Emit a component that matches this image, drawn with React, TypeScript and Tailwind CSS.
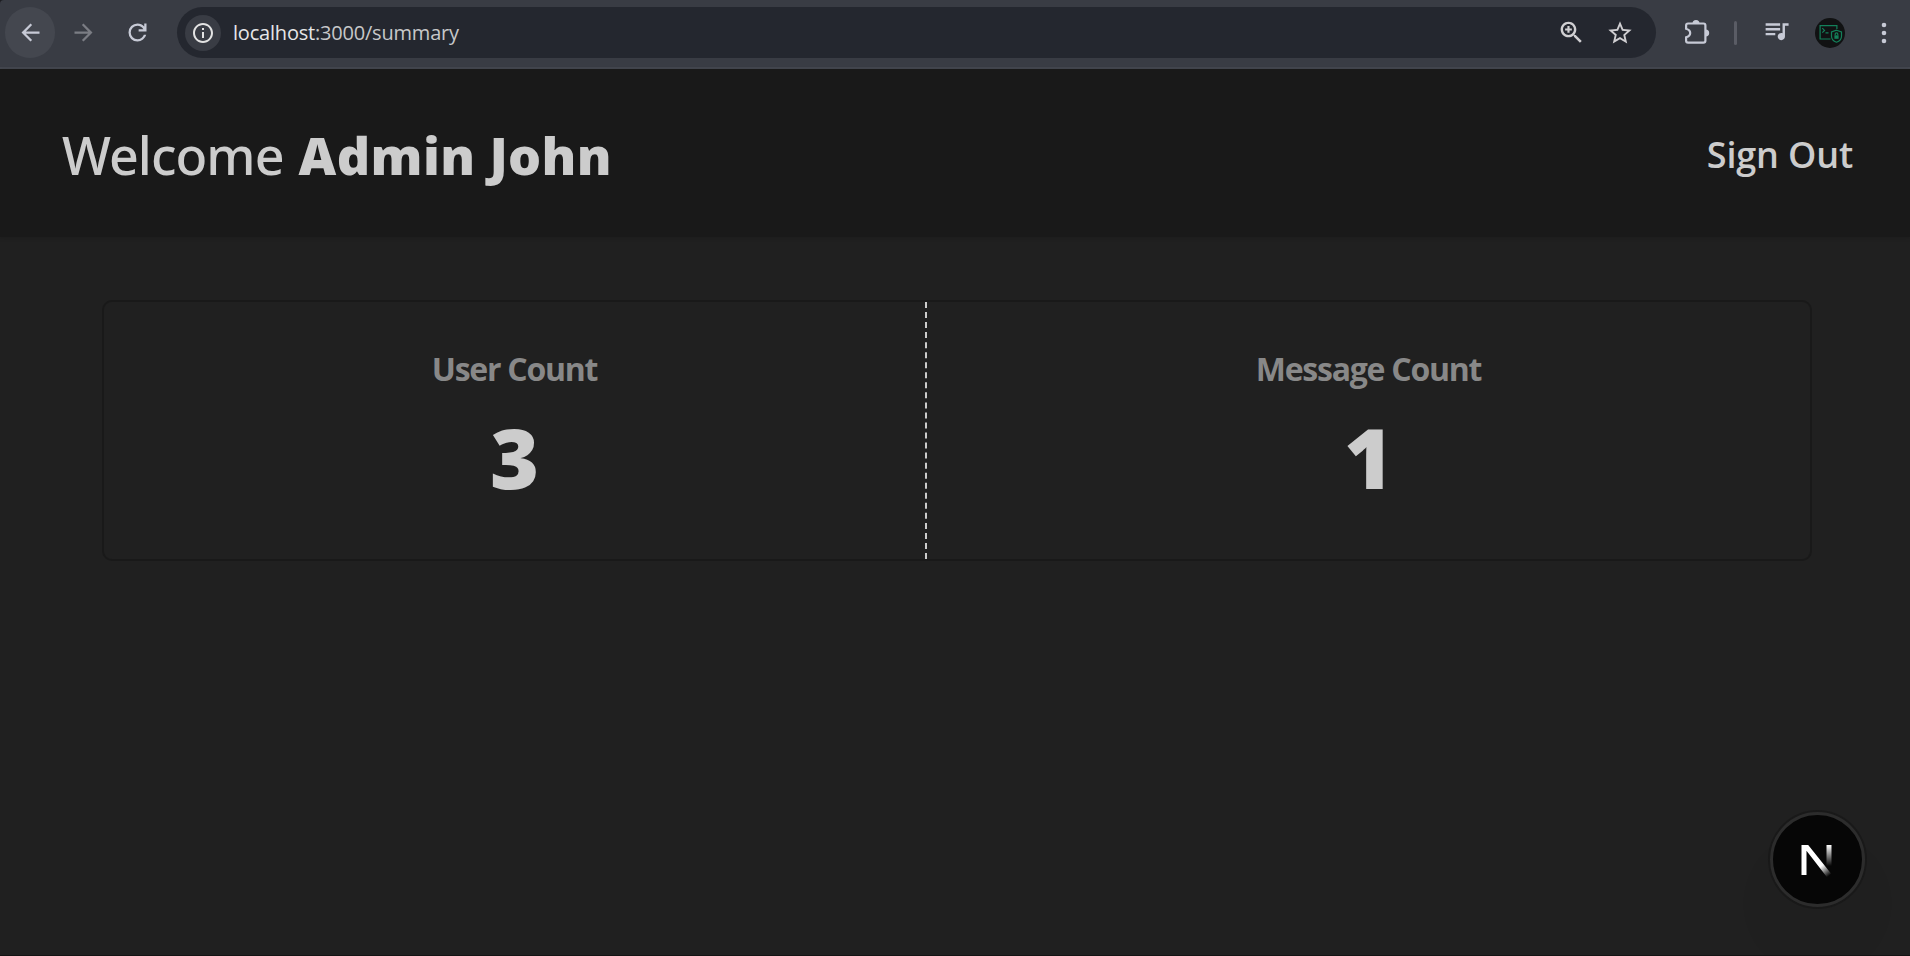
import type { ReactNode } from "react";

function Icon({ d, className }: { d: string; className: string }) {
  return (
    <svg viewBox="0 0 24 24" fill="currentColor" className={`shrink-0 ${className}`}>
      <path d={d} />
    </svg>
  );
}

const paths = {
  back: "M20 11H7.83l5.59-5.59L12 4l-8 8 8 8 1.41-1.41L7.83 13H20v-2z",
  forward: "M4 11h12.17l-5.59-5.59L12 4l8 8-8 8-1.41-1.41L16.17 13H4v-2z",
  reload:
    "M12 20q-3.35 0-5.675-2.325T4 12t2.325-5.675T12 4q1.725 0 3.3.713T18 6.75V4h2v7h-7V9h4.2q-.8-1.4-2.187-2.2T12 6Q9.5 6 7.75 7.75T6 12t1.75 4.25T12 18q1.925 0 3.475-1.1T17.65 14h2.1q-.7 2.65-2.85 4.325T12 20",
  info: "M11 7h2v2h-2zm0 4h2v6h-2zm1-9C6.48 2 2 6.48 2 12s4.48 10 10 10 10-4.48 10-10S17.52 2 12 2zm0 18c-4.41 0-8-3.59-8-8s3.59-8 8-8 8 3.59 8 8-3.59 8-8 8z",
  zoomIn:
    "M15.5 14h-.79l-.28-.27C15.41 12.59 16 11.11 16 9.5 16 5.91 13.09 3 9.5 3S3 5.91 3 9.5 5.91 16 9.5 16c1.61 0 3.09-.59 4.23-1.57l.27.28v.79l5 4.99L20.49 19l-4.99-5zm-6 0C7.01 14 5 11.99 5 9.5S7.01 5 9.5 5 14 7.01 14 9.5 11.99 14 9.5 14zM8.6 6.7h1.8v1.9h1.9v1.8h-1.9v1.9H8.6v-1.9H6.7V8.6h1.9z",
  star: "M22 9.24l-7.19-.62L12 2 9.19 8.63 2 9.24l5.46 4.73L5.82 21 12 17.27 18.18 21l-1.63-7.03L22 9.24zM12 15.4l-3.76 2.27 1-4.28-3.32-2.88 4.38-.38L12 6.1l1.71 4.04 4.38.38-3.32 2.88 1 4.28L12 15.4z",
  queue:
    "M15 6H3v2h12V6zm0 4H3v2h12v-2zM3 16h8v-2H3v2zM17 6v8.18c-.31-.11-.65-.18-1-.18-1.66 0-3 1.34-3 3s1.34 3 3 3 3-1.34 3-3V8h3V6h-5z",
};

function ExtensionsIcon() {
  return (
    <svg viewBox="0 0 26 26" className="h-[26px] w-[26px] shrink-0" fill="none">
      <path
        d="M4 4.5H19.5Q21.4 4.5 21.4 6.4V21.7Q21.4 23.6 19.5 23.6H4Q2.1 23.6 2.1 21.7V18.3Q6.2 17 6.2 14T2.1 9.7V6.4Q2.1 4.5 4 4.5Z"
        stroke="currentColor"
        strokeWidth="2.2"
      />
      <path d="M8.5 4.4a3.5 3.5 0 0 1 7 0zM21.7 10.5a3.5 3.5 0 0 1 0 7z" fill="currentColor" />
    </svg>
  );
}

function Avatar() {
  return (
    <svg viewBox="0 0 30 30" className="h-[30px] w-[30px] shrink-0" fill="none" stroke="#13805a" strokeWidth="1.2">
      <circle cx="15" cy="15" r="15" fill="#111213" stroke="none" />
      <path d="M15.5 21H5.1V7.6H21.9V11" />
      <path d="M7.3 10.2l2.2 2.2-2.2 2.2M10.5 14.8h3" />
      <path d="M21.5 12.2l5 1.8v4.2c0 2.8-2 4.9-5 6-3-1.1-5-3.2-5-6V14z" />
      <path d="M20.2 17.3v-1.2a1.3 1.3 0 0 1 2.6 0v1.2" />
      <rect x="19.4" y="17.3" width="4.2" height="3.5" fill="#13805a" stroke="none" />
    </svg>
  );
}

function BrowserBar() {
  return (
    <div className="bg-[#1c1d21]">
      <div className="flex h-[69px] items-center rounded-tl border-b-2 border-[#44474f] bg-[#393c44] pr-3 pb-0.5 pl-[5px] text-[#c7cad6]">
        <div className="flex h-[51px] w-[50px] items-center justify-center rounded-full bg-[#44474f]">
          <Icon d={paths.back} className="h-[27px] w-[27px]" />
        </div>
        <Icon d={paths.forward} className="ml-[15px] h-[27px] w-[27px] text-[#7b7d84]" />
        <Icon d={paths.reload} className="ml-[27px] h-[27px] w-[27px]" />
        <div className="ml-[26px] flex h-[51px] w-[1479px] items-center rounded-full bg-[#24272f] pr-[22px] pl-2 text-[#d0cfd2]">
          <div className="flex h-9 w-9 items-center justify-center rounded-full bg-[#393c44] text-[#e3e3e3]">
            <Icon d={paths.info} className="h-6 w-6" />
          </div>
          <div className="ml-3 flex-1 font-['Open_Sans',sans-serif] text-[20px] leading-[30px] tracking-[-0.2px] text-[#c7c7c9]">
            <span className="text-[#e6e6e8]">localhost</span>:3000/summary
          </div>
          <Icon d={paths.zoomIn} className="h-[29px] w-[29px]" />
          <Icon d={paths.star} className="ml-5 h-7 w-7" />
        </div>
        <div className="ml-7 pb-0.5">
          <ExtensionsIcon />
        </div>
        <div className="ml-6 h-6 w-[3px] rounded-full bg-[#5a5c65]" />
        <div className="ml-[25px] pb-1">
          <Icon d={paths.queue} className="h-[29px] w-[29px]" />
        </div>
        <div className="ml-6">
          <Avatar />
        </div>
        <svg viewBox="0 0 6 22" className="ml-9 h-[22px] w-1.5 shrink-0" fill="currentColor">
          <circle cx="3" cy="3" r="2.3" />
          <circle cx="3" cy="11" r="2.3" />
          <circle cx="3" cy="19" r="2.3" />
        </svg>
      </div>
    </div>
  );
}

function Stat({ label, children, className }: { label: string; children: ReactNode; className: string }) {
  return (
    <div className={`flex flex-col items-center gap-3 pt-[43px] ${className}`}>
      <h2 className="text-[32px] leading-[48px] font-bold tracking-[-1.25px] text-[#888888]">{label}</h2>
      <p className="text-[84px] leading-[104px] font-extrabold text-[#cccccc]">{children}</p>
    </div>
  );
}

function DevBadge() {
  return (
    <div className="absolute top-[810px] left-[1768px] h-[99px] w-[99px] rounded-full bg-[#191919] p-0.5 shadow-[0_44px_20px_14px_rgba(0,0,0,0.03)]">
      <div className="flex h-full w-full items-center justify-center rounded-full border-[3px] border-[#2c2c2c] bg-[#060606]">
        <svg viewBox="0 0 38 38" className="h-[38px] w-[38px]">
          <defs>
            <linearGradient id="diag" x1="20" y1="20" x2="31" y2="34" gradientUnits="userSpaceOnUse">
              <stop offset="0.3" stopColor="#fff" />
              <stop offset="1" stopColor="#fff" stopOpacity="0" />
            </linearGradient>
            <linearGradient id="bar" x1="0" y1="4" x2="0" y2="25" gradientUnits="userSpaceOnUse">
              <stop offset="0" stopColor="#fff" />
              <stop offset="1" stopColor="#fff" stopOpacity="0" />
            </linearGradient>
          </defs>
          <path d="M2.5 4H9.2L36 37.5L31.3 40.5L7.5 9.8V34H2.5Z" fill="url(#diag)" />
          <path d="M27.5 4H32.5V25H27.5Z" fill="url(#bar)" />
        </svg>
      </div>
    </div>
  );
}

export default function App() {
  return (
    <div className="relative flex h-[956px] w-[1910px] flex-col overflow-hidden border-b border-[#141414] bg-[#202020] font-['Open_Sans',sans-serif] text-[#cccccc]">
      <BrowserBar />
      <header className="flex h-[168px] items-center justify-between bg-[#191919] pr-[57px] pl-[62px] shadow-[0_1px_4px_rgba(0,0,0,0.15)]">
        <h1 className="flex gap-[15px] pt-1 font-['Noto_Sans',sans-serif] text-[52px] leading-[72px] font-medium tracking-[-0.95px]">
          Welcome
          <span className="font-black tracking-[0.4px]">Admin John</span>
        </h1>
        <button className="pt-1 text-[36px] leading-[48px] font-semibold tracking-[-0.15px]">Sign Out</button>
      </header>
      <main className="pt-[63px] pl-[102px]">
        <section className="flex h-[261px] w-[1710px] rounded-[10px] border-2 border-[#191919]">
          <Stat label="User Count" className="w-[823px] border-r-2 border-dashed border-[#cccccc]">
            3
          </Stat>
          <Stat label="Message Count" className="flex-1">
            1
          </Stat>
        </section>
      </main>
      <DevBadge />
    </div>
  );
}
